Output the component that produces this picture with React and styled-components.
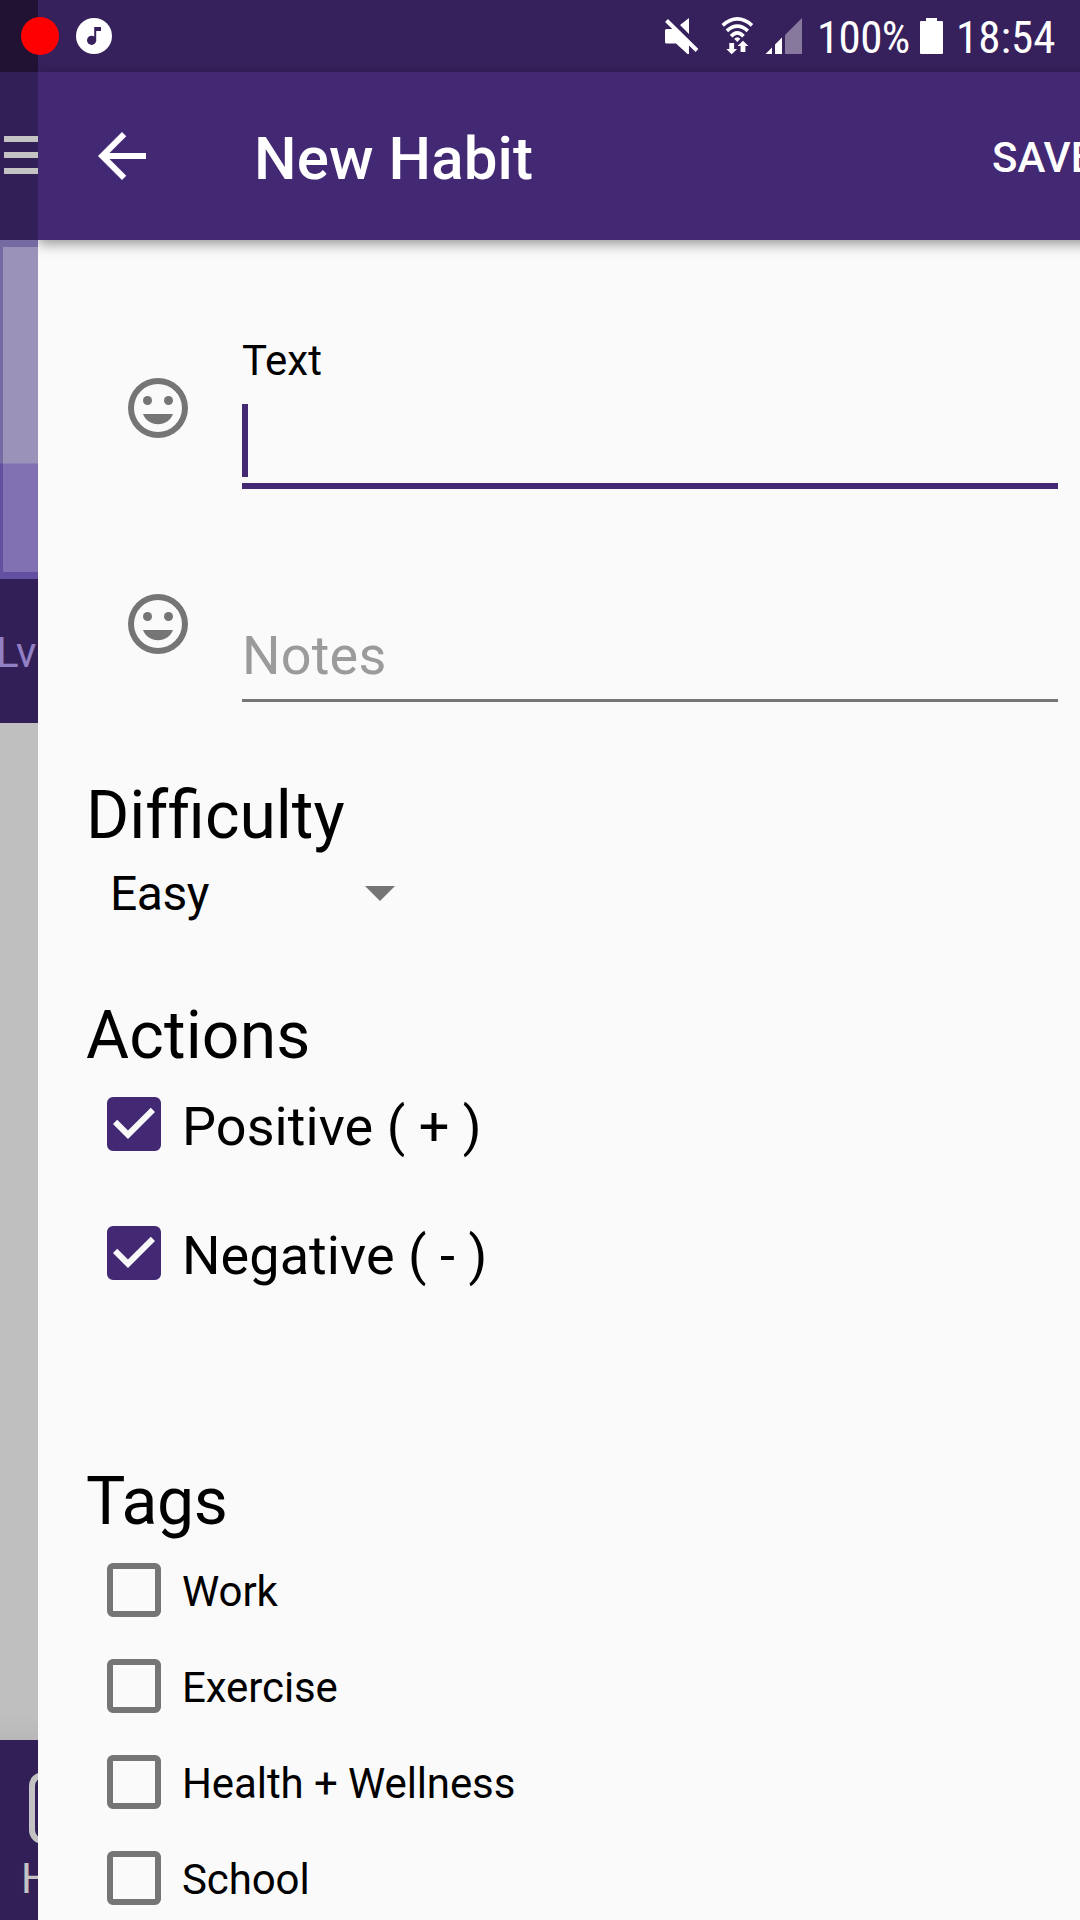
import React from 'react';
import styled, { createGlobalStyle } from 'styled-components';

const GlobalStyle = createGlobalStyle`
  * { box-sizing: border-box; }
  body { margin: 0; background: #fafafa; font-family: Roboto, "Noto Sans", sans-serif; color: #000; }
`;

const Screen = styled.div`
  position: relative;
  display: flex;
  width: 1080px;
  height: 1920px;
  overflow: hidden;
`;

/* Dimmed home screen, visible as a strip behind the sliding page */
const Behind = styled.aside`
  display: flex;
  flex-direction: column;
  flex: none;
  width: 38px;
  overflow: hidden;
  background: #bfbfbf;
`;
const BehindStatus = styled.div`
  flex: none;
  height: 72px;
  background: #211234;
`;
const BehindToolbar = styled.div`
  display: flex;
  flex-direction: column;
  justify-content: center;
  gap: 10px;
  flex: none;
  height: 168px;
  padding: 0 0 2px 4px;
  background: #331f58;
`;
const MenuLine = styled.span`
  height: 6px;
  background: #c3c3c3;
`;
const Avatar = styled.div`
  display: flex;
  flex: none;
  height: 339px;
  padding: 7px 0 7px 3px;
  background: linear-gradient(#766aa3 0 223px, #6450a0 224px);
`;
const AvatarInner = styled.div`
  flex: 1;
  background: linear-gradient(#9a92b8 0 216px, #8271b2 217px);
`;
const Level = styled.div`
  flex: none;
  height: 144px;
  padding-top: 49px;
  text-indent: -4px;
  background: #331f58;
  color: #9180c4;
  font-size: 42px;
  line-height: 49px;
  white-space: nowrap;
`;
const BehindBody = styled.div`
  flex: 1;
  background: linear-gradient(to top, #b8b8b8, #bfbfbf 26px);
`;
const BottomNav = styled.nav`
  display: flex;
  flex-direction: column;
  flex: none;
  height: 180px;
  padding-top: 32px;
  background: #331f58;
  color: #c3c3c3;
`;
const NavIcon = styled.span`
  flex: none;
  width: 72px;
  height: 72px;
  margin-left: 29px;
  border: 6px solid #c3c3c3;
  border-radius: 14px;
`;
const NavLabel = styled.span`
  padding: 10px 0 0 21px;
  font-size: 42px;
  line-height: 49px;
`;

/* Foreground page */
const Page = styled.main`
  display: flex;
  flex-direction: column;
  flex: none;
  width: 1080px;
  overflow: hidden;
  background: #fafafa;
`;
const PageStatus = styled.div`
  flex: none;
  height: 72px;
  background: #37215d;
`;
const Toolbar = styled.header`
  display: flex;
  align-items: center;
  flex: none;
  height: 168px;
  padding-left: 48px;
  background: #432874;
  color: #fff;
  box-shadow: 0 4px 12px rgba(0, 0, 0, 0.4);
`;
const Title = styled.h1`
  width: 738px;
  margin: 0 0 0 96px;
  padding-top: 5px;
  font-size: 60px;
  font-weight: 500;
  letter-spacing: 0.1px;
  line-height: 70px;
`;
const SaveButton = styled.span`
  padding-top: 3px;
  font-size: 42px;
  font-weight: 500;
  line-height: 50px;
`;
const Icon = styled.svg`
  display: block;
  flex: none;
  width: 72px;
  height: 72px;
  fill: ${(p) => p.$color || '#fff'};
`;

const Fields = styled.section`
  display: flex;
  flex-direction: column;
  padding: 96px 0 0 48px;
`;
const FieldRow = styled.div`
  display: flex;
  align-items: flex-start;
  gap: 48px;
  height: 216px;
  padding-left: 36px;
`;
const FieldIcon = styled.div`
  padding-top: 36px;
`;
const FieldBox = styled.div`
  display: flex;
  flex-direction: column;
  width: 816px;
`;
const FieldLabel = styled.label`
  height: 68px;
  font-size: 42px;
  line-height: 49px;
`;
const Input = styled.div`
  display: flex;
  height: ${(p) => (p.$active ? 85 : 82)}px;
  border-bottom: ${(p) => (p.$active ? '6px solid #432874' : '3px solid #757575')};
  color: #9b9b9b;
  font-size: 54px;
  letter-spacing: 0.2px;
  line-height: 72px;
`;
const Caret = styled.span`
  width: 6px;
  height: 73px;
  background: #432874;
`;

const Sections = styled.section`
  display: flex;
  flex-direction: column;
  padding-left: 48px;
`;
const Heading = styled.h2`
  margin: ${(p) => p.$top}px 0 0;
  font-size: 66px;
  font-weight: 400;
  letter-spacing: ${(p) => p.$tracking || 0}px;
  line-height: 76px;
`;
const Syllable = styled.span`
  display: inline-block;
`;
const Spinner = styled.div`
  display: flex;
  align-items: center;
  justify-content: space-between;
  width: 309px;
  height: 60px;
  padding: 0 0 1px 24px;
  margin-top: 10px;
  font-size: 48px;
  letter-spacing: -0.5px;
  line-height: 56px;
`;
const Arrow = styled.svg`
  width: 30px;
  height: 15px;
  fill: #757575;
`;
const CheckList = styled.div`
  display: flex;
  flex-direction: column;
  gap: ${(p) => p.$gap}px;
  padding: 2px 0 0 21px;
`;
const CheckRow = styled.div`
  display: flex;
  align-items: center;
  gap: 21px;
  height: 96px;
`;
const CheckBox = styled.span`
  flex: none;
  width: 54px;
  height: 54px;
  border: 6px solid ${(p) => (p.$checked ? '#432874' : '#757575')};
  border-radius: 6px;
  background: ${(p) => (p.$checked ? '#432874' : 'transparent')};
`;
const Check = styled.svg`
  display: block;
  width: 42px;
  height: 42px;
  fill: #fafafa;
`;
const CheckText = styled.span`
  padding-top: ${(p) => (p.$large ? 5 : 3)}px;
  font-size: ${(p) => (p.$large ? 54 : 42)}px;
  letter-spacing: ${(p) => (p.$large ? 0.06 : -0.1)}px;
  line-height: 60px;
  white-space: pre;
`;

/* System status bar, floats above both screens */
const StatusBar = styled.div`
  position: absolute;
  inset: 0 0 auto 0;
  display: flex;
  align-items: center;
  height: 72px;
  padding: 0 24px 0 21px;
  color: #fff;
`;
const RecordDot = styled.span`
  width: 38px;
  height: 38px;
  border-radius: 50%;
  background: #f00;
`;
const MusicIcon = styled.svg`
  width: 36px;
  height: 36px;
  margin-left: 17px;
`;
const StatusIcons = styled.svg`
  width: 140px;
  height: 72px;
  margin: 0 13px 0 auto;
  fill: #fff;
`;
const StatusText = styled.span`
  width: ${(p) => p.$w}px;
  padding-top: 3px;
  font-size: 45px;
  font-stretch: 75%;
  letter-spacing: ${(p) => p.$tracking || 0}px;
  line-height: 54px;
  white-space: nowrap;
`;
const Battery = styled.svg`
  width: 24px;
  height: 36px;
  margin-right: 12px;
  fill: #fff;
`;

const Smiley = () => (
  <Icon viewBox="0 0 24 24" $color="#757575">
    <path d="M12 2a10 10 0 1 0 0 20a10 10 0 1 0 0-20zM12 20a8 8 0 1 1 0-16a8 8 0 1 1 0 16z" />
    <circle cx="8.5" cy="9.5" r="1.5" />
    <circle cx="15.5" cy="9.5" r="1.5" />
    <path d="M12 17.4c2.33 0 4.2-1.35 5-3.4H7c.8 2.05 2.67 3.4 5 3.4z" />
  </Icon>
);

const Option = ({ label, checked, large }) => (
  <CheckRow>
    <CheckBox $checked={checked}>
      {checked && (
        <Check viewBox="5 5 14 14">
          <path d="M10 17l-5-5 1.41-1.41L10 14.17l7.59-7.59L19 8z" />
        </Check>
      )}
    </CheckBox>
    <CheckText $large={large}>{label}</CheckText>
  </CheckRow>
);

const TAGS = ['Work', 'Exercise', 'Health + Wellness', 'School'];

export default function App() {
  return (
    <Screen>
      <GlobalStyle />
      <Behind>
        <BehindStatus />
        <BehindToolbar>
          <MenuLine />
          <MenuLine />
          <MenuLine />
        </BehindToolbar>
        <Avatar>
          <AvatarInner />
        </Avatar>
        <Level>Lv</Level>
        <BehindBody />
        <BottomNav>
          <NavIcon />
          <NavLabel>H</NavLabel>
        </BottomNav>
      </Behind>

      <Page>
        <PageStatus />
        <Toolbar>
          <Icon viewBox="0 0 24 24">
            <path d="M20 11H7.83l5.59-5.59L12 4l-8 8 8 8 1.41-1.41L7.83 13H20v-2z" />
          </Icon>
          <Title>New Habit</Title>
          <SaveButton>SAVE</SaveButton>
        </Toolbar>
        <Fields>
          <FieldRow>
            <FieldIcon>
              <Smiley />
            </FieldIcon>
            <FieldBox>
              <FieldLabel>Text</FieldLabel>
              <Input $active>
                <Caret />
              </Input>
            </FieldBox>
          </FieldRow>
          <FieldRow>
            <FieldIcon>
              <Smiley />
            </FieldIcon>
            <FieldBox>
              <FieldLabel />
              <Input>Notes</Input>
            </FieldBox>
          </FieldRow>
        </Fields>
        <Sections>
          <Heading $top={10}>
            <Syllable>Dif</Syllable>
            <Syllable>ficulty</Syllable>
          </Heading>
          <Spinner>
            Easy
            <Arrow viewBox="0 0 30 15">
              <path d="M0 0h30L15 15z" />
            </Arrow>
          </Spinner>
          <Heading $top={74} $tracking={0.15}>Actions</Heading>
          <CheckList $gap={33}>
            <Option label="Positive ( + )" checked large />
            <Option label="Negative ( - )" checked large />
          </CheckList>
          <Heading $top={163} $tracking={-0.3}>Tags</Heading>
          <CheckList $gap={0}>
            {TAGS.map((tag) => (
              <Option key={tag} label={tag} />
            ))}
          </CheckList>
        </Sections>
      </Page>

      <StatusBar>
        <RecordDot />
        <MusicIcon viewBox="0 0 36 36">
          <circle cx="18" cy="18" r="18" fill="#fff" />
          <g fill="#37215d">
            <circle cx="15.6" cy="22.3" r="4.6" />
            <path d="M18.200 9H25v4h-4.800v9.300h-2z" />
          </g>
        </MusicIcon>
        <StatusIcons viewBox="0 0 140 72">
          <path d="M2.500 29H10L25 44v10h-1.500L12 43.500H2.500Q1 43.500 1 42V30.500Q1 29 2.500 29zM25 18v16L16 25z" />
          <path d="M2.500 20.500L33 50.500" stroke="#fff" strokeWidth="4" />
          <g fill="none" stroke="#fff" strokeWidth="3.6">
            <path d="M58.700 25.300Q73.300 12.600 88 25.300" />
            <path d="M62.900 30.900Q73.300 21.500 83.800 30.900" />
            <path d="M67.100 36.200Q73.300 29.600 79.500 36.200" />
          </g>
          <path d="M70.200 38.700Q73.300 35.700 76.400 38.700L73.300 42z" />
          <path d="M65.300 43h4.800v6h3L67.700 54.300 62.300 49h3zM76.600 52v-6h-3L79 40.700 84.400 46h-3v6z" />
          <path d="M101.500 54l6.500-6.500V54zM111 44.500l7-7V54h-7z" />
          <path d="M121 35l17-17v36h-17z" opacity="0.4" />
        </StatusIcons>
        <StatusText $w={103} $tracking={-0.6}>100%</StatusText>
        <Battery viewBox="0 0 24 36">
          <path d="M6 0h11v3h5q1 0 1 1v31q0 1-1 1H1q-1 0-1-1V4q0-1 1-1h5z" />
        </Battery>
        <StatusText $w={100}>18:54</StatusText>
      </StatusBar>
    </Screen>
  );
}
